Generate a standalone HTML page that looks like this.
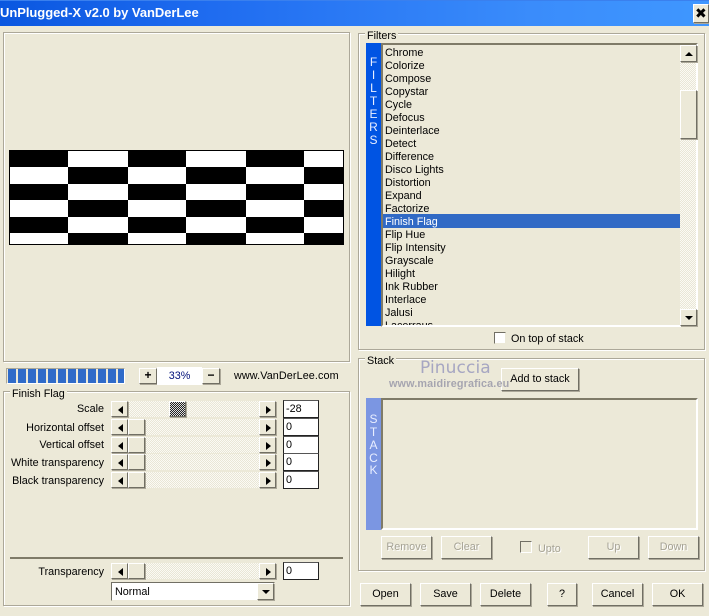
<!DOCTYPE html>
<html><head><meta charset="utf-8"><style>
html,body{margin:0;padding:0}
body{width:709px;height:616px;position:relative;overflow:hidden;background:#ece9d8;font:10.8px/13px "Liberation Sans",sans-serif;color:#000}
div,span{position:absolute;box-sizing:border-box;white-space:nowrap}
.g{border:1px solid #aca899;box-shadow:inset 1px 1px 0 #fff,1px 1px 0 #fff}
.l{background:#ece9d8;padding:0 2px;height:13px}
.b{background:#ece9d8;border:1px solid;border-color:#fff #716f64 #716f64 #fff;box-shadow:1px 1px 0 #aca899;text-align:center}
.t{line-height:21px}
.d{color:#a5a294;text-shadow:1px 1px 0 #fff}
.tr{height:16px;left:128px;width:131px;background:repeating-conic-gradient(#fbfaf4 0 25%,#e9e6d6 0 50%) 0 0/2px 2px}
.r{text-align:right;left:0;width:104px}
.i{left:283px;width:36px;height:18px;background:#fff;border:1px solid #222;border-top-color:#555;padding:0 2px;line-height:16px}
.al,.ar,.au,.ad{width:0;height:0}
.al{border:4px solid transparent;border-right:5px solid #000;border-left:0;left:6px;top:4px}
.ar{border:4px solid transparent;border-left:5px solid #000;border-right:0;left:6px;top:4px}
.au{border:4px solid transparent;border-bottom:4px solid #000;border-top:0;left:4px;top:6px}
.ad{border:4px solid transparent;border-top:4px solid #000;border-bottom:0;left:4px;top:6px}
.sq{background:#000}
.v{color:#e8eeff;left:366px;width:15px;text-align:center;font-size:12px;line-height:13px}
</style></head><body>
<div style="left:0;top:0;width:709px;height:26px;background:linear-gradient(90deg,#0a57e0 0,#1f6cf0 30%,#3a8cfb 75%,#3f97ff 100%);border-top:1px solid #3a80ee"></div>
<div style="left:0;top:3px;color:#fff;font:bold 13px/20px 'Liberation Sans',sans-serif;letter-spacing:-.05px">UnPlugged-X v2.0 by VanDerLee</div>
<div class="b" style="left:693px;top:4px;width:16px;height:19px"><span style="left:1px;top:2px;font:bold 14px/14px 'DejaVu Sans',sans-serif">✖</span></div>

<div class="g" style="left:3px;top:32px;width:347px;height:330px"></div>
<div style="left:9px;top:150px;width:335px;height:95px;background:#000"></div>
<div style="left:10px;top:151px;width:333px;height:93px;background:#fff"></div>
<div class="sq" style="left:9px;top:150px;width:59px;height:17px"></div>
<div class="sq" style="left:128px;top:150px;width:58px;height:17px"></div>
<div class="sq" style="left:246px;top:150px;width:58px;height:17px"></div>
<div class="sq" style="left:68px;top:167px;width:60px;height:17px"></div>
<div class="sq" style="left:186px;top:167px;width:60px;height:17px"></div>
<div class="sq" style="left:304px;top:167px;width:40px;height:17px"></div>
<div class="sq" style="left:9px;top:184px;width:59px;height:16px"></div>
<div class="sq" style="left:128px;top:184px;width:58px;height:16px"></div>
<div class="sq" style="left:246px;top:184px;width:58px;height:16px"></div>
<div class="sq" style="left:68px;top:200px;width:60px;height:17px"></div>
<div class="sq" style="left:186px;top:200px;width:60px;height:17px"></div>
<div class="sq" style="left:304px;top:200px;width:40px;height:17px"></div>
<div class="sq" style="left:9px;top:217px;width:59px;height:16px"></div>
<div class="sq" style="left:128px;top:217px;width:58px;height:16px"></div>
<div class="sq" style="left:246px;top:217px;width:58px;height:16px"></div>
<div class="sq" style="left:68px;top:233px;width:60px;height:12px"></div>
<div class="sq" style="left:186px;top:233px;width:60px;height:12px"></div>
<div class="sq" style="left:304px;top:233px;width:40px;height:12px"></div>

<div style="left:6px;top:368px;width:119px;height:16px;border:1px solid #aca899;border-color:#aca899 #fff #fff #aca899;background:repeating-linear-gradient(90deg,#ece9d8 0 1px,#2f6bc9 1px 9px,#ece9d8 9px 10px)"></div>
<div class="b" style="left:139px;top:368px;width:18px;height:16px;font:bold 12px/13px 'Liberation Sans',sans-serif">+</div>
<div style="left:157px;top:367px;width:45px;height:18px;background:#fff;color:#00107a;text-align:center;line-height:18px">33%</div>
<div class="b" style="left:202px;top:368px;width:18px;height:16px;font:bold 12px/13px 'Liberation Sans',sans-serif">−</div>
<div style="left:234px;top:369px;line-height:14px;letter-spacing:.1px">www.VanDerLee.com</div>

<div class="g" style="left:3px;top:391px;width:347px;height:215px"></div>
<div class="l" style="left:10px;top:387px;line-height:14px;height:14px">Finish Flag</div>

<div class="r" style="top:403px">Scale</div>
<div class="tr" style="top:401px"></div>
<div class="b" style="left:111px;top:401px;width:17px;height:16px"><span class="al"></span></div>
<div class="b" style="left:169px;top:401px;width:17px;height:16px;background:repeating-conic-gradient(#222 0 25%,#ddd 0 50%) 0 0/2px 2px"></div>
<div class="b" style="left:259px;top:401px;width:17px;height:16px"><span class="ar"></span></div>
<div class="i" style="top:400px">-28</div>

<div class="r" style="top:422px">Horizontal offset</div>
<div class="tr" style="top:419px"></div>
<div class="b" style="left:111px;top:419px;width:17px;height:16px"><span class="al"></span></div>
<div class="b" style="left:128px;top:419px;width:17px;height:16px"></div>
<div class="b" style="left:259px;top:419px;width:17px;height:16px"><span class="ar"></span></div>
<div class="i" style="top:418px">0</div>

<div class="r" style="top:439px">Vertical offset</div>
<div class="tr" style="top:437px"></div>
<div class="b" style="left:111px;top:437px;width:17px;height:16px"><span class="al"></span></div>
<div class="b" style="left:128px;top:437px;width:17px;height:16px"></div>
<div class="b" style="left:259px;top:437px;width:17px;height:16px"><span class="ar"></span></div>
<div class="i" style="top:436px">0</div>

<div class="r" style="top:457px">White transparency</div>
<div class="tr" style="top:454px"></div>
<div class="b" style="left:111px;top:454px;width:17px;height:16px"><span class="al"></span></div>
<div class="b" style="left:128px;top:454px;width:17px;height:16px"></div>
<div class="b" style="left:259px;top:454px;width:17px;height:16px"><span class="ar"></span></div>
<div class="i" style="top:453px">0</div>

<div class="r" style="top:475px">Black transparency</div>
<div class="tr" style="top:472px"></div>
<div class="b" style="left:111px;top:472px;width:17px;height:16px"><span class="al"></span></div>
<div class="b" style="left:128px;top:472px;width:17px;height:16px"></div>
<div class="b" style="left:259px;top:472px;width:17px;height:16px"><span class="ar"></span></div>
<div class="i" style="top:471px">0</div>

<div style="left:10px;top:557px;width:333px;height:2px;background:#7f7b68"></div>
<div class="r" style="top:566px">Transparency</div>
<div class="tr" style="top:563px"></div>
<div class="b" style="left:111px;top:563px;width:17px;height:16px"><span class="al"></span></div>
<div class="b" style="left:128px;top:563px;width:17px;height:16px"></div>
<div class="b" style="left:259px;top:563px;width:17px;height:16px"><span class="ar"></span></div>
<div class="i" style="top:562px">0</div>
<div style="left:111px;top:582px;width:164px;height:19px;background:#fff;border:1px solid;border-color:#716f64 #ece9d8 #ece9d8 #716f64;padding-left:3px;line-height:19px">Normal</div>
<div class="b" style="left:257px;top:583px;width:17px;height:17px"><span class="ad"></span></div>

<div class="g" style="left:358px;top:33px;width:347px;height:317px"></div>
<div class="l" style="left:365px;top:29px;line-height:14px;height:14px">Filters</div>
<div style="left:366px;top:43px;width:15px;height:283px;background:#0054e3"></div>
<div class="v" style="top:56px">F</div><div class="v" style="top:69px">I</div><div class="v" style="top:82px">L</div><div class="v" style="top:95px">T</div><div class="v" style="top:108px">E</div><div class="v" style="top:121px">R</div><div class="v" style="top:134px">S</div>
<div style="left:381px;top:43px;width:317px;height:284px;border:2px solid;border-color:#7f7b68 #fff #fff #7f7b68;overflow:hidden"></div>
<div style="left:383px;top:214px;width:297px;height:14px;background:#316ac5"></div>
<div style="left:383px;top:47px;width:297px;height:278px;overflow:hidden">
<span style="left:2px;top:0">Chrome</span>
<span style="left:2px;top:13px">Colorize</span>
<span style="left:2px;top:26px">Compose</span>
<span style="left:2px;top:39px">Copystar</span>
<span style="left:2px;top:52px">Cycle</span>
<span style="left:2px;top:65px">Defocus</span>
<span style="left:2px;top:78px">Deinterlace</span>
<span style="left:2px;top:91px">Detect</span>
<span style="left:2px;top:104px">Difference</span>
<span style="left:2px;top:117px">Disco Lights</span>
<span style="left:2px;top:130px">Distortion</span>
<span style="left:2px;top:143px">Expand</span>
<span style="left:2px;top:156px">Factorize</span>
<span style="left:2px;top:169px;color:#fff">Finish Flag</span>
<span style="left:2px;top:182px">Flip Hue</span>
<span style="left:2px;top:195px">Flip Intensity</span>
<span style="left:2px;top:208px">Grayscale</span>
<span style="left:2px;top:221px">Hilight</span>
<span style="left:2px;top:234px">Ink Rubber</span>
<span style="left:2px;top:247px">Interlace</span>
<span style="left:2px;top:260px">Jalusi</span>
<span style="left:2px;top:273px">Lacerraus</span>
</div>
<div style="left:680px;top:45px;width:16px;height:280px;background:repeating-conic-gradient(#fbfaf4 0 25%,#e9e6d6 0 50%) 0 0/2px 2px"></div>
<div class="b" style="left:680px;top:45px;width:17px;height:17px"><span class="au"></span></div>
<div class="b" style="left:680px;top:90px;width:17px;height:49px"></div>
<div class="b" style="left:680px;top:309px;width:17px;height:17px"><span class="ad"></span></div>

<div style="left:494px;top:332px;width:12px;height:12px;background:#fff;border:1px solid #716f64;border-right-color:#ece9d8;border-bottom-color:#ece9d8"></div>
<div style="left:511px;top:333px">On top of stack</div>

<div class="g" style="left:358px;top:358px;width:347px;height:213px"></div>
<div class="l" style="left:365px;top:354px;line-height:14px;height:14px">Stack</div>
<div style="left:420px;top:358px;font:17px/20px 'DejaVu Sans',sans-serif;color:#a6a6c2;letter-spacing:.1px">Pinuccia</div>
<div class="b t" style="left:501px;top:368px;width:78px;height:23px">Add to stack</div>
<div style="left:389px;top:378px;font:bold 10.8px/13px 'Liberation Sans',sans-serif;color:#a6a5b0;letter-spacing:.15px">www.maidiregrafica.eu</div>
<div style="left:366px;top:398px;width:15px;height:132px;background:#7b96e2"></div>
<div class="v" style="top:413px">S</div><div class="v" style="top:426px">T</div><div class="v" style="top:439px">A</div><div class="v" style="top:452px">C</div><div class="v" style="top:464px">K</div>
<div style="left:381px;top:398px;width:317px;height:132px;border:2px solid;border-color:#7f7b68 #fff #fff #7f7b68"></div>
<div class="b t d" style="left:381px;top:536px;width:51px;height:23px">Remove</div>
<div class="b t d" style="left:441px;top:536px;width:51px;height:23px">Clear</div>
<div style="left:520px;top:541px;width:12px;height:12px;border:1px solid #716f64;border-right-color:#fff;border-bottom-color:#fff"></div>
<div class="d" style="left:538px;top:543px">Upto</div>
<div class="b t d" style="left:588px;top:536px;width:51px;height:23px">Up</div>
<div class="b t d" style="left:648px;top:536px;width:51px;height:23px">Down</div>

<div class="b t" style="left:360px;top:583px;width:51px;height:23px">Open</div>
<div class="b t" style="left:420px;top:583px;width:51px;height:23px">Save</div>
<div class="b t" style="left:480px;top:583px;width:51px;height:23px">Delete</div>
<div class="b t" style="left:547px;top:583px;width:30px;height:23px">?</div>
<div class="b t" style="left:592px;top:583px;width:51px;height:23px">Cancel</div>
<div class="b t" style="left:652px;top:583px;width:51px;height:23px">OK</div>
</body></html>
